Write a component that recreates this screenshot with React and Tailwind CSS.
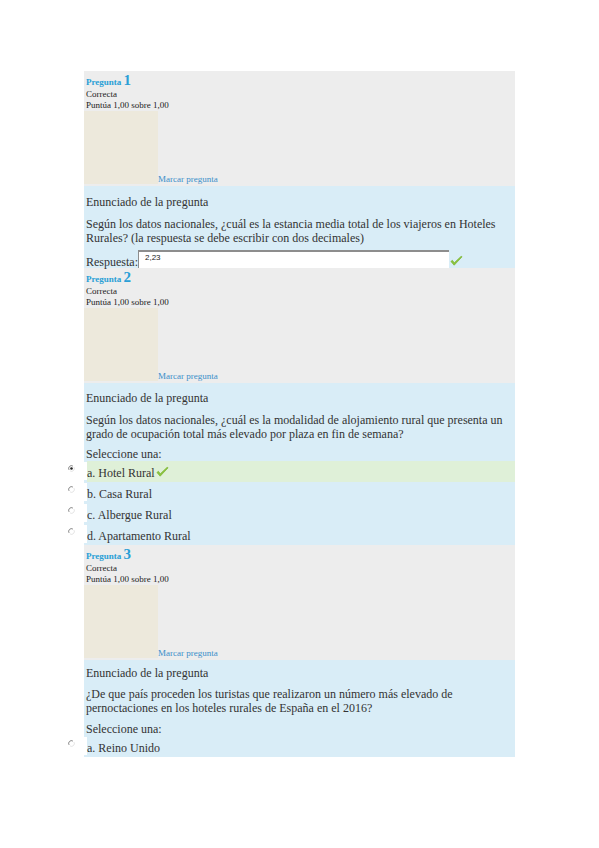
import React from "react";

const serif = { fontFamily: '"Liberation Serif", "Times New Roman", serif' };

function Check({ className = "" }) {
  return (
    <svg viewBox="0 0 14 12" className={className}>
      <path d="M1 6.5 L4.5 10.5 L13 1.5 L12 1 L4.6 8 L2.6 5.3 Z" fill="#8cc63f" stroke="#7db536" strokeWidth="0.8" strokeLinejoin="round" />
    </svg>
  );
}

function Radio({ checked }) {
  return (
    <svg viewBox="0 0 10 10" className="w-[7px] h-[7px]">
      <circle cx="5" cy="5" r="4" fill="#fff" />
      <path d="M1.5 7 A4 4 0 0 1 7 1.5" fill="none" stroke="#7a7a7a" strokeWidth="1.3" />
      <path d="M8.5 3 A4 4 0 0 1 3 8.5" fill="none" stroke="#d8d8d8" strokeWidth="1" />
      {checked && <circle cx="5" cy="5" r="1.8" fill="#222" />}
    </svg>
  );
}

function Info({ n }) {
  return (
    <div className="bg-[#ededed] pb-[2px]">
      <div className="pl-[2px] pt-[2px] leading-[14px] text-[#2a9fd6] font-bold">
        <span className="text-[9px]">Pregunta </span>
        <span className="text-[15px]">{n}</span>
      </div>
      <div className="pl-[2px] text-[9px] leading-[11px] text-[#222]">Correcta</div>
      <div className="pl-[2px] text-[9px] leading-[11px] text-[#222]">Puntúa 1,00 sobre 1,00</div>
      <div className="flex items-end">
        <div className="w-[74px] h-[73px] bg-[#ede9dc]" />
        <div className="text-[9px] leading-[10px] text-[#3b8fc9]">Marcar pregunta</div>
      </div>
    </div>
  );
}

function Option({ label, checked, correct }) {
  return (
    <div className="flex -ml-[21px] h-[21px]">
      <div className="w-[22px] h-[18px] mt-[1px] bg-white pl-[3px] pt-[3px] shrink-0">
        <Radio checked={checked} />
      </div>
      <div className={`flex-1 flex items-end pb-[2px] text-[12px] leading-[14px] text-[#333] ${correct ? "bg-[#dff0d8]" : ""}`}>
        <span>{label}</span>
        {correct && <Check className="w-[13px] h-[12px] ml-[1px] mb-[2px]" />}
      </div>
    </div>
  );
}

export default function App() {
  return (
    <div className="bg-white min-h-[848px] w-[599px] pt-[71px] pl-[84px]" style={serif}>
      <div className="w-[431px]">
        {/* Pregunta 1 */}
        <Info n="1" />
        <div className="bg-[#d9edf7] pl-[2px] pt-[9px] text-[12px] text-[#333] leading-[14px]">
          <p>Enunciado de la pregunta</p>
          <p className="mt-[8px]">
            Según los datos nacionales, ¿cuál es la estancia media total de los viajeros en Hoteles Rurales? (la respuesta se debe escribir con dos decimales)
          </p>
          <div className="flex items-end mt-[5px]">
            <span className="leading-[14px] mb-[-1px]">Respuesta:</span>
            <div
              className="w-[311px] h-[18px] bg-white border-t-2 border-l border-[#8d8d8d] pl-[6px] text-[8px] leading-[12px] text-[#222]"
              style={{ fontFamily: '"Liberation Sans", Arial, sans-serif' }}
            >
              2,23
            </div>
            <Check className="w-[13px] h-[12px] ml-[1px] mb-[1px]" />
          </div>
        </div>

        {/* Pregunta 2 */}
        <Info n="2" />
        <div className="bg-[#d9edf7] pl-[2px] pt-[8px] text-[12px] text-[#333] leading-[14px]">
          <p>Enunciado de la pregunta</p>
          <p className="mt-[8px]">
            Según los datos nacionales, ¿cuál es la modalidad de alojamiento rural que presenta un grado de ocupación total más elevado por plaza en fin de semana?
          </p>
          <p className="mt-[6px]">Seleccione una:</p>
          <Option label="a. Hotel Rural" checked correct />
          <Option label="b. Casa Rural" />
          <Option label="c. Albergue Rural" />
          <Option label="d.  Apartamento Rural" />
        </div>

        {/* Pregunta 3 */}
        <Info n="3" />
        <div className="bg-[#d9edf7] pl-[2px] pt-[6px] text-[12px] text-[#333] leading-[14px]">
          <p>Enunciado de la pregunta</p>
          <p className="mt-[7px]">
            ¿De que país proceden los turistas que realizaron un número más elevado de pernoctaciones en los hoteles rurales de España en el 2016?
          </p>
          <p className="mt-[7px]">Seleccione una:</p>
          <div className="-mb-[1px]">
            <Option label="a. Reino Unido" />
          </div>
        </div>
      </div>
    </div>
  );
}
